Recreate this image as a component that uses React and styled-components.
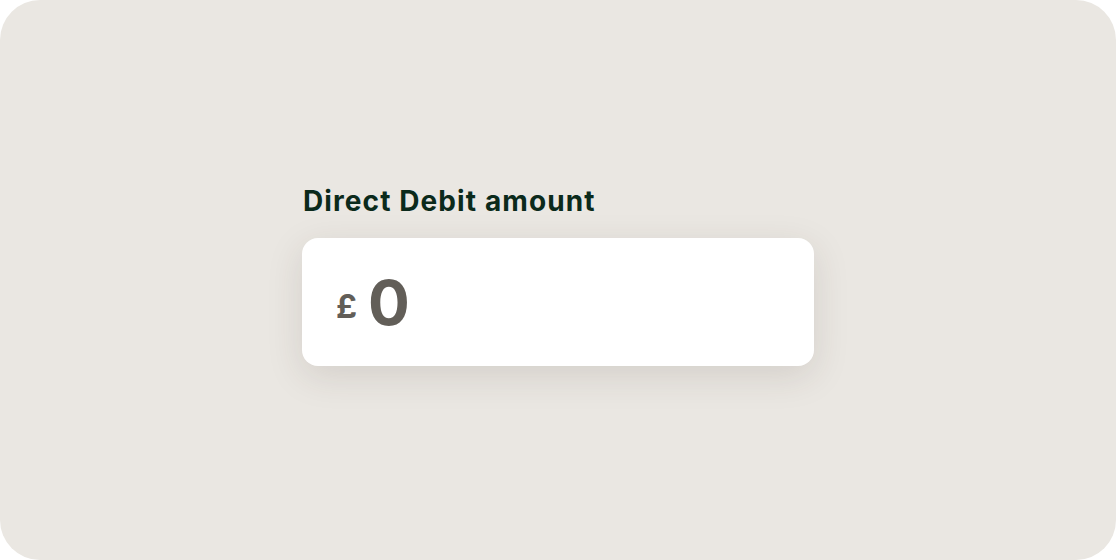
import React from "react";
import styled, { createGlobalStyle } from "styled-components";

const Global = createGlobalStyle`
  html, body { margin: 0; padding: 0; background: #ffffff; }
  body { font-family: Inter, "Noto Sans", sans-serif; }
`;

const Frame = styled.div`
  width: 1116px;
  height: 560px;
  box-sizing: border-box;
  background: #eae7e2;
  border-radius: 40px;
  display: flex;
  justify-content: center;
  align-items: flex-start;
  padding-top: 183px;
`;

const Field = styled.div`
  width: 512px;
  display: flex;
  flex-direction: column;
  gap: 18px;
`;

const Label = styled.label`
  font-family: Inter, "Noto Sans", sans-serif;
  font-weight: 700;
  font-size: 28px;
  line-height: 37px;
  color: #0b2a1b;
  letter-spacing: 1.1px;
  padding-left: 1px;
`;

const Box = styled.div`
  height: 128px;
  box-sizing: border-box;
  background: #ffffff;
  border-radius: 16px;
  box-shadow: 0 10px 36px rgba(60, 50, 40, 0.13);
  display: flex;
  align-items: center;
  padding: 0 34px;
  gap: 11px;
`;

const Currency = styled.span`
  font-family: Inter, "Noto Sans", sans-serif;
  font-weight: 700;
  font-size: 33px;
  color: #625e58;
  line-height: 1;
  margin-top: 8px;
`;

const Amount = styled.span`
  font-family: Inter, "Noto Sans", sans-serif;
  font-weight: 700;
  font-size: 62px;
  color: #625e58;
  line-height: 1;
  margin-top: 2px;
`;

export default function App() {
  return (
    <>
      <Global />
      <Frame>
        <Field>
          <Label>Direct Debit amount</Label>
          <Box>
            <Currency>£</Currency>
            <Amount>0</Amount>
          </Box>
        </Field>
      </Frame>
    </>
  );
}
